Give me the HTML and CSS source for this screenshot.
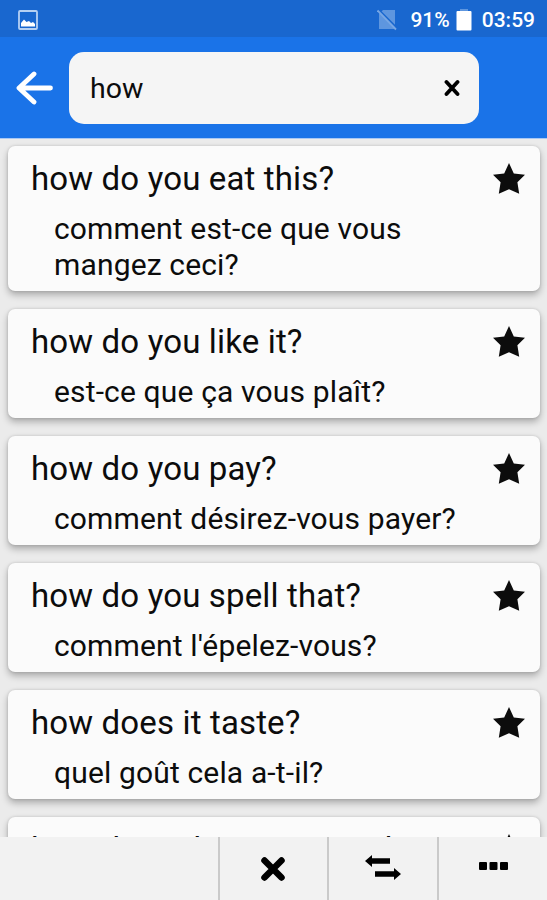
FILE: index.html
```html
<!DOCTYPE html>
<html lang="en">
<head>
  <meta charset="UTF-8">
  <meta name="viewport" content="width=device-width, initial-scale=1.0">
  <title>Phrasebook</title>
  <link rel="stylesheet" href="styles.css">
</head>
<body>

  <svg class="defs" width="0" height="0">
    <symbol id="star" viewBox="0 0 32 31">
      <path d="M16 0 L20.8 10.5 L32 11.8 L24.4 19.3 L26.200 30.8 L16 26.200 L5.800 30.8 L7.600 19.3 L0 11.8 L11.2 10.5 Z"/>
    </symbol>
  </svg>

  <div class="status-bar">
    <svg class="icon-picture" width="20" height="20" viewBox="0 0 20 20">
      <rect x="1" y="1" width="18" height="18" rx="1" fill="none" stroke="#b5d0f3" stroke-width="1.8"/>
      <path d="M3 16.5 V13 L6 9.500 L8.500 12 L11 11 L13 13 L15 12 L17 14 V16.5 Z" fill="#fff"/>
    </svg>
    <svg class="icon-sim" width="20" height="22" viewBox="0 0 20 22">
      <path d="M6 1 H18 V20 H2 V5 Z" fill="#5e96df"/>
      <path d="M1 0 L20 19" stroke="#1967cf" stroke-width="1.800"/>
      <path d="M0.500 1.500 L19 20.500" stroke="#78a7e4" stroke-width="1.800"/>
    </svg>
    <span class="percent">91%</span>
    <svg class="icon-battery" width="16" height="22" viewBox="0 0 16 22">
      <rect x="4" y="0" width="8" height="3" fill="#5e96df"/>
      <rect x="0.500" y="2" width="15" height="19.500" rx="1" fill="#fff"/>
    </svg>
    <span class="time">03:59</span>
  </div>

  <div class="header">
    <svg class="icon-back" width="38" height="34" viewBox="0 0 38 34">
      <path d="M19 3 L4 17 L19 31 M5 17 H35.500" fill="none" stroke="#fff" stroke-width="4.800" stroke-linecap="round" stroke-linejoin="round"/>
    </svg>
    <div class="search">
      <span class="query">how</span>
      <svg class="icon-clear" width="16" height="18" viewBox="0 0 16 18">
        <path d="M2.500 3 L13.500 15 M13.500 3 L2.500 15" stroke="#000" stroke-width="3.800" stroke-linecap="round"/>
      </svg>
    </div>
  </div>

  <div class="list">
    <div class="card">
      <svg class="star"><use href="#star"/></svg>
      <div class="phrase">how do you eat this?</div>
      <div class="translation">comment est-ce que vous mangez ceci?</div>
    </div>
    <div class="card">
      <svg class="star"><use href="#star"/></svg>
      <div class="phrase">how do you like it?</div>
      <div class="translation">est-ce que ça vous plaît?</div>
    </div>
    <div class="card">
      <svg class="star"><use href="#star"/></svg>
      <div class="phrase">how do you pay?</div>
      <div class="translation">comment désirez-vous payer?</div>
    </div>
    <div class="card">
      <svg class="star"><use href="#star"/></svg>
      <div class="phrase">how do you spell that?</div>
      <div class="translation">comment l'épelez-vous?</div>
    </div>
    <div class="card">
      <svg class="star"><use href="#star"/></svg>
      <div class="phrase">how does it taste?</div>
      <div class="translation">quel goût cela a-t-il?</div>
    </div>
    <div class="card">
      <svg class="star"><use href="#star"/></svg>
      <div class="phrase">how does the menu work?</div>
    </div>
  </div>

  <div class="toolbar">
    <div class="tool blank"></div>
    <div class="tool">
      <svg width="28" height="28" viewBox="0 0 28 28">
        <path d="M5.500 5.500 L22.500 22.500 M22.500 5.500 L5.500 22.500" stroke="#000" stroke-width="6.500" stroke-linecap="round"/>
      </svg>
    </div>
    <div class="tool">
      <svg class="icon-swap" width="36" height="25" viewBox="0 0 36 25">
        <path d="M0 6 L7 0 V3.200 H25 V8.800 H7 V12 Z M36 19 L29 13 V16.200 H10 V21.800 H29 V25 Z"/>
      </svg>
    </div>
    <div class="tool">
      <svg class="icon-more" width="29" height="8" viewBox="0 0 29 8">
        <rect x="0" y="0" width="8" height="8" rx="1"/>
        <rect x="10.500" y="0" width="8" height="8" rx="1"/>
        <rect x="21" y="0" width="8" height="8" rx="1"/>
      </svg>
    </div>
  </div>

</body>
</html>
```
FILE: styles.css
```css
* {
  box-sizing: border-box;
}

body {
  margin: 0;
  height: 900px;
  display: flex;
  flex-direction: column;
  overflow: hidden;
  font-family: Roboto, sans-serif;
  background: #ebebeb;
  color: #0c0c0c;
}

svg {
  display: block;
  flex-shrink: 0;
}

.defs {
  display: none;
}

.status-bar {
  height: 37px;
  flex-shrink: 0;
  display: flex;
  align-items: center;
  padding: 2px 12px 0 18px;
  background: #1967cf;
  color: #fff;
  font-size: 21px;
  font-weight: 500;
}

.icon-sim {
  margin-left: auto;
}

.percent {
  margin-left: 13px;
}

.icon-battery {
  margin: 0 10px 0 6px;
}

.header {
  height: 102px;
  flex-shrink: 0;
  display: flex;
  align-items: center;
  padding-left: 15px;
  background: #1a73e8;
  border-bottom: 1px solid #a9c8f4;
}

.search {
  width: 410px;
  height: 72px;
  margin-left: 16px;
  padding: 0 19px 0 21px;
  display: flex;
  align-items: center;
  justify-content: space-between;
  border-radius: 15px;
  background: #f5f5f5;
}

.query {
  padding-top: 2px;
  font-size: 28.5px;
}

.list {
  flex: 1;
  min-height: 0;
  overflow: hidden;
  padding: 7px 7px 0 8px;
}

.card {
  min-height: 109px;
  margin-bottom: 18px;
  padding: 12px 15px 8px 23px;
  border-radius: 7px;
  background: #fbfbfb;
  box-shadow: 0 4px 7px rgba(0, 0, 0, 0.27), 0 0 3px rgba(0, 0, 0, 0.15);
}

.phrase {
  font-size: 33px;
  line-height: 42px;
  letter-spacing: 0.15px;
}

.translation {
  width: 430px;
  margin: 11px 0 0 23px;
  font-size: 30px;
  line-height: 36px;
  letter-spacing: 0.15px;
}

.star {
  float: right;
  width: 32px;
  height: 31px;
  margin-top: 5px;
  fill: #0c0c0c;
}

.toolbar {
  height: 63px;
  flex-shrink: 0;
  display: flex;
  background: #f2f2f2;
}

.tool {
  width: 110px;
  display: flex;
  align-items: center;
  justify-content: center;
  border-left: 2px solid #cacaca;
}

.tool.blank {
  width: 218px;
  border-left: none;
}

.icon-swap {
  margin-bottom: 2px;
}

.icon-more {
  margin-bottom: 5px;
}
```
